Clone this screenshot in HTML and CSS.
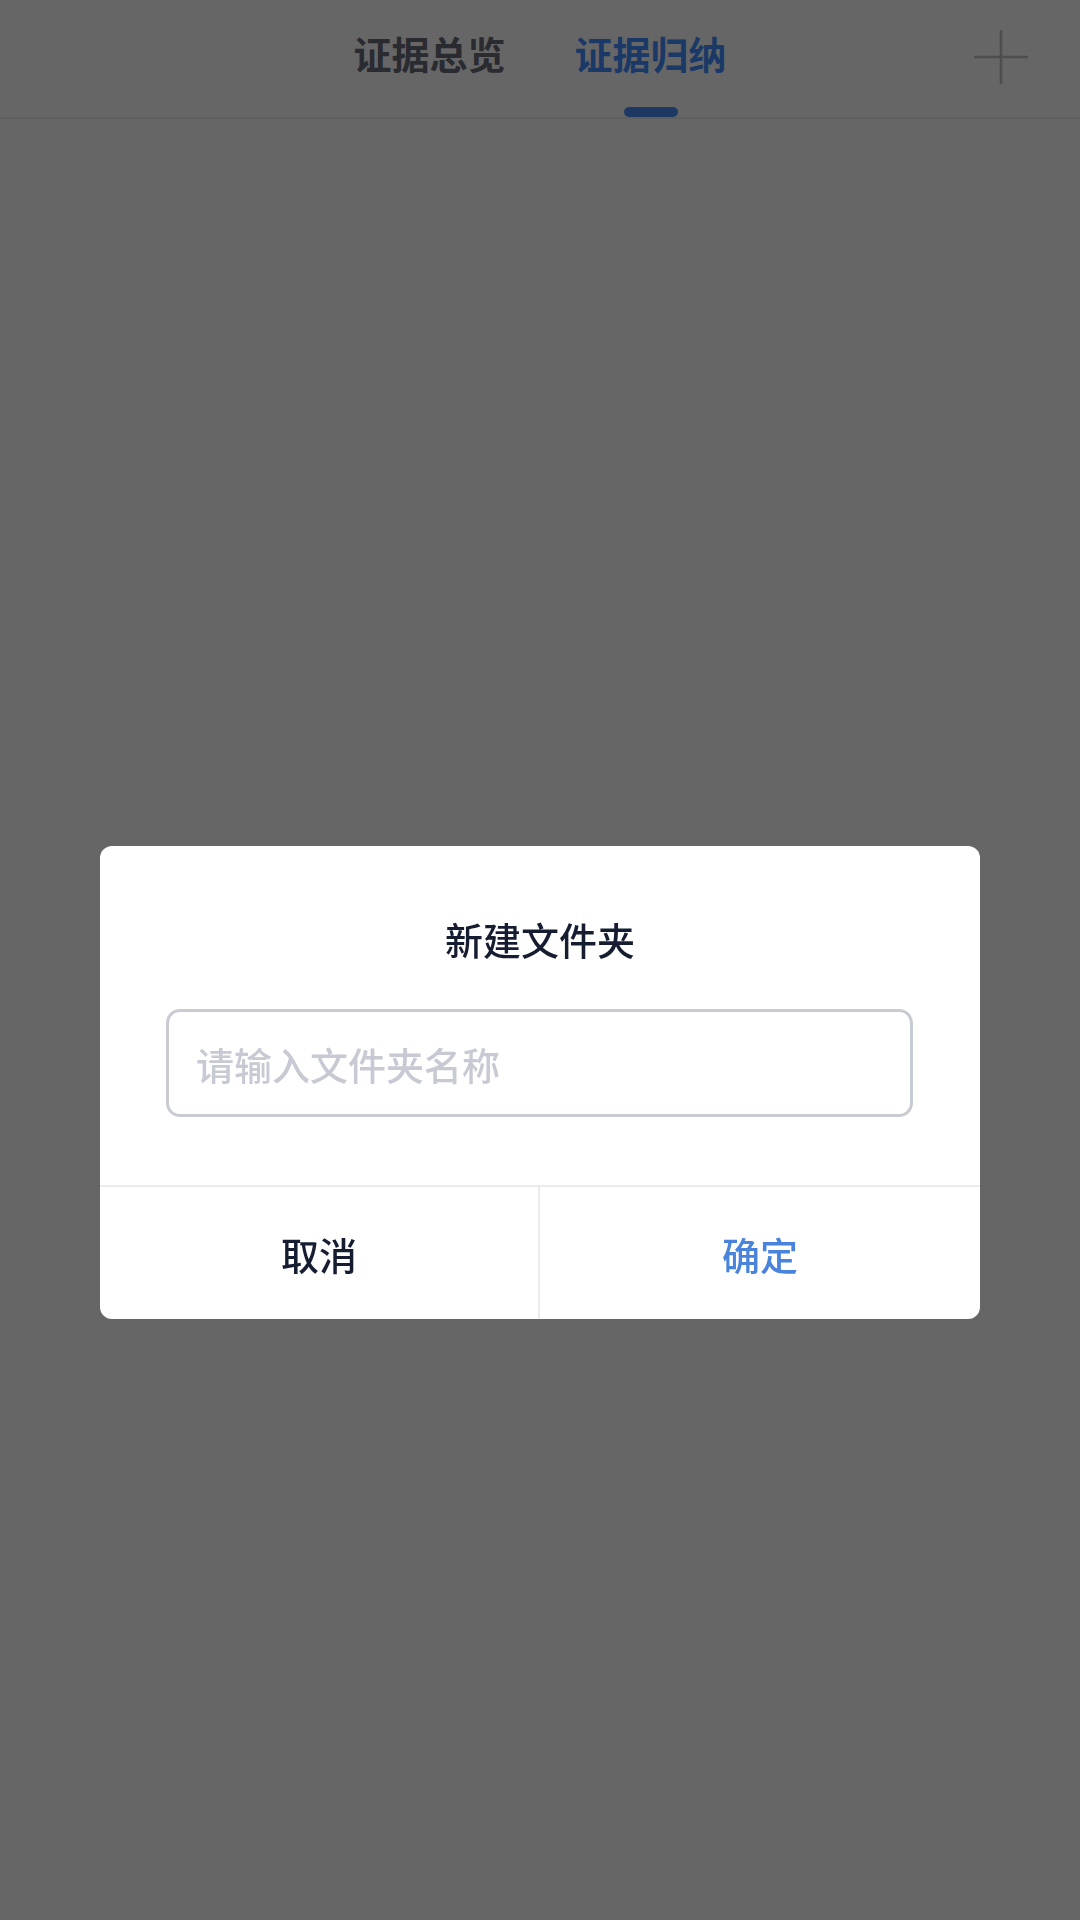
FILE: index.html
```html
<!DOCTYPE html>
<html lang="zh-CN">
<head>
    <meta charset="UTF-8">
    <meta name="viewport" content="width=device-width, initial-scale=1.0">
    <title>证据归纳</title>
    <link rel="stylesheet" href="styles.css">
</head>
<body>

    <div class="header">
        <div class="header-side"></div>
        <div class="tabs">
            <div class="tab">证据总览</div>
            <div class="tab active">证据归纳</div>
        </div>
        <div class="header-side right">
            <svg class="add-icon" viewBox="0 0 56 56" width="56" height="56">
                <path d="M28 1 V55 M1 28 H55" stroke="#c4c4c6" stroke-width="2.6" fill="none"/>
            </svg>
        </div>
    </div>

    <div class="content"></div>

    <!-- new folder dialog -->
    <div class="mask">
        <div class="dialog">
            <div class="dialog-title">新建文件夹</div>
            <input class="dialog-input" type="text" placeholder="请输入文件夹名称">
            <div class="dialog-buttons">
                <div class="dialog-btn cancel">取消</div>
                <div class="dialog-btn confirm">确定</div>
            </div>
        </div>
    </div>

</body>
</html>
```

FILE: styles.css
```css
/* Base Styles */
body {
    margin: 0;
    height: 1920px;
    background-color: #ffffff;
    font-family: "Noto Sans CJK SC", "Noto Sans", sans-serif;
}

/* Header tabs */
.header {
    display: grid;
    grid-template-columns: 1fr auto 1fr;
    height: 117px;
    border-bottom: 2px solid #ebebeb;
}
.header-side.right {
    display: flex;
    justify-content: flex-end;
    padding: 29px 51px 0 0;
}
.add-icon {
    display: block;
}
.tabs {
    display: flex;
    gap: 69px;
}
.tab {
    position: relative;
    display: flex;
    align-items: center;
    padding-bottom: 12px;
    font-size: 38px;
    font-weight: 700;
    line-height: 1;
    color: #6a6b78;
}
.tab.active {
    color: #4490ff;
}
.tab.active::after {
    content: "";
    position: absolute;
    left: 50%;
    bottom: 0;
    width: 54px;
    height: 10px;
    margin-left: -27px;
    border-radius: 5px;
    background-color: #4a8cf5;
}

/* Dialog */
.mask {
    position: fixed;
    inset: 0;
    display: flex;
    justify-content: center;
    align-items: flex-start;
    padding-top: 846px;
    background-color: rgba(0, 0, 0, 0.6);
}
.dialog {
    width: 880px;
    border-radius: 12px;
    background-color: #ffffff;
    overflow: hidden;
}
.dialog-title {
    padding-top: 74px;
    font-size: 38px;
    font-weight: 500;
    line-height: 38px;
    text-align: center;
    color: #161d30;
}
.dialog-input {
    display: block;
    box-sizing: border-box;
    width: calc(100% - 133px);
    height: 108px;
    margin: 51px 0 68px 66px;
    padding: 0 27px;
    border: 3px solid #c9cbd3;
    border-radius: 14px;
    font-family: inherit;
    font-size: 38px;
    font-weight: 500;
    color: #161d30;
    outline: none;
}
.dialog-input::placeholder {
    color: #c8cad3;
}
.dialog-buttons {
    display: grid;
    grid-template-columns: 1fr 1fr;
    border-top: 2px solid #ebebeb;
}
.dialog-btn {
    height: 132px;
    display: flex;
    align-items: center;
    justify-content: center;
    font-size: 38px;
    font-weight: 500;
    color: #161d30;
}
.dialog-btn.cancel {
    border-right: 2px solid #ebebeb;
}
.dialog-btn.confirm {
    color: #4a83dc;
}
```
